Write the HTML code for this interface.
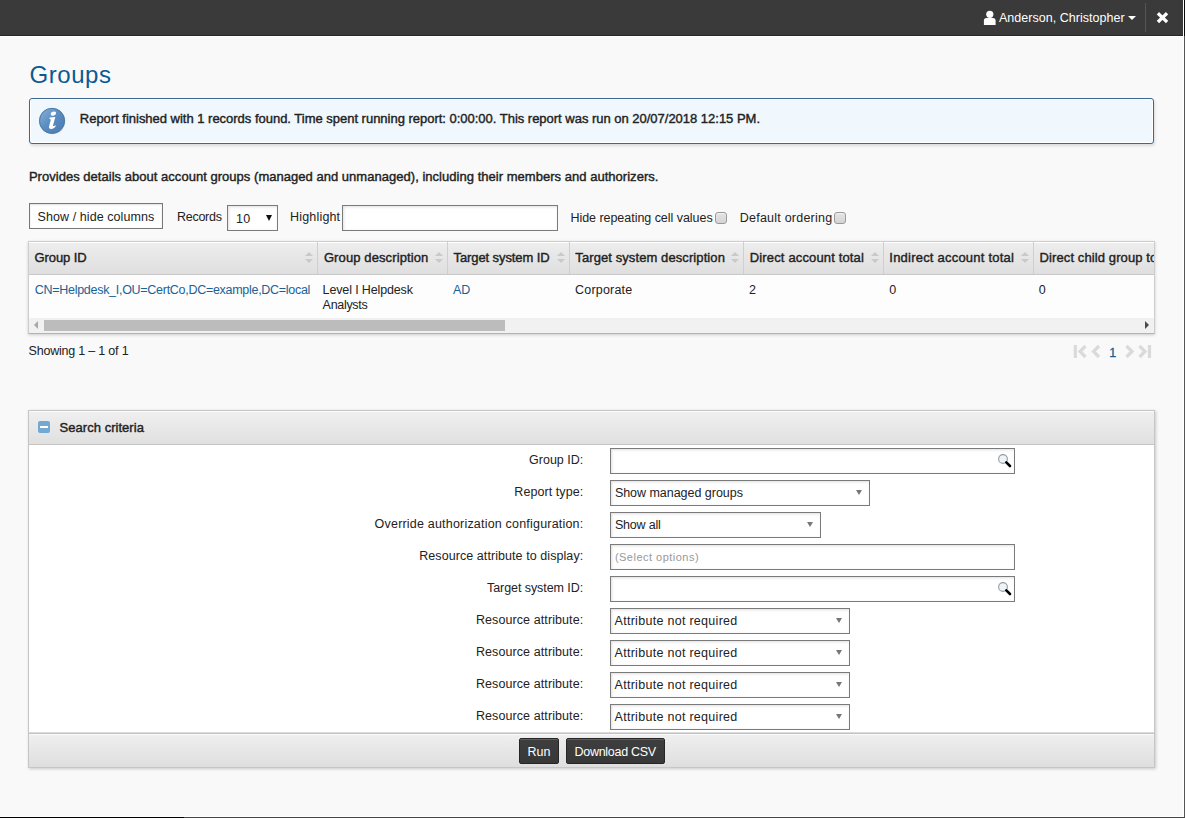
<!DOCTYPE html>
<html><head><meta charset="utf-8">
<style>
html,body{margin:0;padding:0}
body{width:1185px;height:818px;overflow:hidden;position:relative;background:#f9f9f9;font-family:"Liberation Sans",sans-serif;}
.a{position:absolute;box-sizing:border-box}
.t{position:absolute;white-space:nowrap;font-family:"Liberation Sans",sans-serif}
.inp{position:absolute;box-sizing:border-box;background:#fff;border:1px solid #7a7a7a;box-shadow:inset 1px 1px 3px rgba(0,0,0,.12)}
.sel{position:absolute;box-sizing:border-box;background:#fff;border:1px solid #7a7a7a;box-shadow:inset 1px 1px 3px rgba(0,0,0,.12)}
.arr{position:absolute;width:0;height:0;border-left:3.5px solid transparent;border-right:3.5px solid transparent;border-top:5px solid #777}
.sort{position:absolute;width:9px;height:11px}
.sort:before{content:"";position:absolute;left:0;top:0;border-left:4.5px solid transparent;border-right:4.5px solid transparent;border-bottom:4.5px solid #c9c9c9}
.sort:after{content:"";position:absolute;left:0;top:6.5px;border-left:4.5px solid transparent;border-right:4.5px solid transparent;border-top:4.5px solid #c9c9c9}
.vdiv{position:absolute;top:242px;width:1px;height:32px;background:#cfcfcf}
.cb{position:absolute;width:12px;height:12px;box-sizing:border-box;border:1px solid #9a9a9a;border-radius:3px;background:linear-gradient(#e4e4e4,#d4d4d4);box-shadow:inset 0 1px 1px rgba(255,255,255,.6)}
.btn{position:absolute;box-sizing:border-box;background:linear-gradient(#3e3e3e,#383838);border:1px solid #262626;border-radius:2px;height:26px;top:738px;box-shadow:inset 0 1px 0 rgba(255,255,255,.18)}
</style></head>
<body>
<!-- top bar -->
<div class="a" style="left:0;top:0;width:1183px;height:35px;background:#3a3a3a"></div>
<div class="a" style="left:0;top:35px;width:1183px;height:1px;background:#272727"></div>
<div class="a" style="left:0;top:36px;width:1184px;height:1px;background:#fff"></div>
<div class="a" style="left:1183px;top:0;width:1px;height:818px;background:#fff"></div>
<div class="a" style="left:1184px;top:0;width:1px;height:36px;background:#0a0a0a"></div>
<div class="a" style="left:1184px;top:36px;width:1px;height:782px;background:#555"></div>
<div class="a" style="left:0;top:816px;width:1184px;height:1px;background:#fff"></div>
<div class="a" style="left:0;top:817px;width:184px;height:1px;background:#000"></div>
<div class="a" style="left:184px;top:817px;width:1001px;height:1px;background:#454545"></div>
<!-- user icon -->
<svg class="a" style="left:983px;top:10px" width="15" height="16" viewBox="0 0 15 16">
<circle cx="6.8" cy="4.3" r="3.6" fill="#fff"/>
<path d="M0.9 15.1 L0.9 10.6 Q0.9 7.9 3.6 7.9 L9.9 7.9 Q12.6 7.9 12.6 10.6 L12.6 15.1 Z" fill="#fff"/>
</svg>
<div class="a" style="left:1128px;top:16px;width:0;height:0;border-left:4px solid transparent;border-right:4px solid transparent;border-top:4px solid #fff"></div>
<div class="a" style="left:1145px;top:3px;width:1px;height:29px;background:#555"></div>
<svg class="a" style="left:1156px;top:12px" width="13" height="12" viewBox="0 0 13 12">
<path d="M3.1 2.4 L9.9 8.9 M9.9 2.4 L3.1 8.9" stroke="#fff" stroke-width="3.3" stroke-linecap="square"/>
</svg>

<!-- info box -->
<div class="a" style="left:29px;top:98px;width:1125px;height:46px;border:1px solid #3d6893;border-radius:3px;background:#f1f8fd;box-shadow:inset 0 0 0 1px #fff,1px 2px 3px rgba(0,0,0,.12)"></div>
<svg class="a" style="left:38px;top:106px" width="29" height="29" viewBox="0 0 29 29">
<defs>
<linearGradient id="ig" x1="0" y1="0" x2="1" y2="1">
<stop offset="0" stop-color="#8db2da"/><stop offset="0.45" stop-color="#5d8fc3"/><stop offset="0.8" stop-color="#4f80b6"/><stop offset="1" stop-color="#6f9dcf"/>
</linearGradient>
</defs>
<circle cx="14.3" cy="15.3" r="13" fill="rgba(0,0,0,.16)"/>
<circle cx="14" cy="14.8" r="12.9" fill="url(#ig)"/>
<circle cx="14" cy="14.8" r="12.5" fill="none" stroke="#4a77a7" stroke-width="0.9"/>
<ellipse cx="15.4" cy="7.6" rx="2.8" ry="1.9" transform="rotate(-18 15.4 7.6)" fill="#fff"/>
<path d="M11.6 11.4 L17.3 11.0 L15.0 19.4 Q14.8 20.3 15.8 20.0 L18.0 19.3 Q17.0 22.5 13.6 22.9 Q10.4 23.1 11.0 20.5 L12.8 13.8 Q13.0 12.9 11.5 12.9 Z" fill="#fff"/>
</svg>

<!-- toolbar -->
<div class="a" style="left:29px;top:203px;width:134px;height:26px;border:1px solid #777;background:#fff;box-shadow:inset 0 1px 2px rgba(0,0,0,.12)"></div>
<div class="sel" style="left:227px;top:205px;width:51px;height:26px"></div>
<div class="a" style="left:266px;top:215px;width:0;height:0;border-left:3.2px solid transparent;border-right:3.2px solid transparent;border-top:6px solid #111"></div>
<div class="inp" style="left:342px;top:205px;width:216px;height:26px"></div>
<div class="cb" style="left:715px;top:212px"></div>
<div class="cb" style="left:834px;top:212px"></div>

<!-- table -->
<div class="a" style="left:28px;top:241px;width:1127px;height:93px;border:1px solid #cdcdcd;border-bottom-color:#b3b3b3;background:#fdfdfd;box-shadow:0 1px 3px rgba(0,0,0,.18)"></div>
<div class="a" style="left:29px;top:242px;width:1125px;height:32px;background:linear-gradient(#ededed,#dfdfdf);border-top:1px solid #fff"></div>
<div class="a" style="left:29px;top:274px;width:1125px;height:1px;background:#c8c8c8"></div>
<div class="vdiv" style="left:317px"></div>
<div class="vdiv" style="left:447px"></div>
<div class="vdiv" style="left:569px"></div>
<div class="vdiv" style="left:743px"></div>
<div class="vdiv" style="left:883px"></div>
<div class="vdiv" style="left:1033px"></div>
<div class="sort" style="left:305px;top:252px"></div>
<div class="sort" style="left:435px;top:252px"></div>
<div class="sort" style="left:557px;top:252px"></div>
<div class="sort" style="left:731px;top:252px"></div>
<div class="sort" style="left:871px;top:252px"></div>
<div class="sort" style="left:1021px;top:252px"></div>
<!-- scrollbar -->
<div class="a" style="left:29px;top:318px;width:1125px;height:15px;background:#f1f1f1"></div>
<div class="a" style="left:44px;top:320px;width:461px;height:11px;background:#bcbcbc"></div>
<div class="a" style="left:34px;top:321px;width:0;height:0;border-top:4px solid transparent;border-bottom:4px solid transparent;border-right:4.5px solid #a8a8a8"></div>
<div class="a" style="left:1145px;top:321px;width:0;height:0;border-top:4px solid transparent;border-bottom:4px solid transparent;border-left:4.5px solid #4a4a4a"></div>

<!-- pagination -->
<svg class="a" style="left:1072px;top:344px" width="82" height="15" viewBox="0 0 82 15">
<g fill="none" stroke="#dadada" stroke-width="3.2" stroke-linejoin="miter">
<path d="M3.3 1 V14"/>
<path d="M13.5 2 L8 7.5 L13.5 13"/>
<path d="M27 2 L21.5 7.5 L27 13"/>
<path d="M54.5 2 L60 7.5 L54.5 13"/>
<path d="M67.5 2 L73 7.5 L67.5 13"/>
<path d="M77.5 1 V14"/>
</g>
</svg>

<!-- search panel -->
<div class="a" style="left:28px;top:410px;width:1127px;height:358px;border:1px solid #c6c6c6;background:#fff;box-shadow:1px 1px 3px rgba(0,0,0,.2)"></div>
<div class="a" style="left:29px;top:411px;width:1125px;height:33px;background:linear-gradient(#efefef,#e0e0e0);border-top:1px solid #fafafa"></div>
<div class="a" style="left:29px;top:444px;width:1125px;height:1px;background:#c4c4c4"></div>
<div class="a" style="left:38px;top:421px;width:12px;height:12px;border-radius:2px;background:#73a8d2"></div>
<div class="a" style="left:40px;top:426px;width:8px;height:2px;background:#fff"></div>

<!-- form controls -->
<div class="inp" style="left:610px;top:448px;width:405px;height:26px"></div>
<div class="sel" style="left:610px;top:480px;width:260px;height:26px"></div>
<div class="arr" style="left:856px;top:490px"></div>
<div class="sel" style="left:610px;top:512px;width:211px;height:26px"></div>
<div class="arr" style="left:807px;top:522px"></div>
<div class="inp" style="left:610px;top:544px;width:405px;height:26px"></div>
<div class="inp" style="left:610px;top:576px;width:405px;height:26px"></div>
<div class="sel" style="left:610px;top:608px;width:240px;height:26px"></div>
<div class="arr" style="left:836px;top:618px"></div>
<div class="sel" style="left:610px;top:640px;width:240px;height:26px"></div>
<div class="arr" style="left:836px;top:650px"></div>
<div class="sel" style="left:610px;top:672px;width:240px;height:26px"></div>
<div class="arr" style="left:836px;top:682px"></div>
<div class="sel" style="left:610px;top:704px;width:240px;height:26px"></div>
<div class="arr" style="left:836px;top:714px"></div>
<svg class="a" style="left:997px;top:453px" width="16" height="16" viewBox="0 0 16 16">
<circle cx="6" cy="6" r="4.4" fill="#eaf4fd" stroke="#9a9a9a" stroke-width="1.1"/>
<path d="M9.3 9.3 L13 13" stroke="#000" stroke-width="2.6" stroke-linecap="round"/>
</svg>
<svg class="a" style="left:997px;top:581px" width="16" height="16" viewBox="0 0 16 16">
<circle cx="6" cy="6" r="4.4" fill="#eaf4fd" stroke="#9a9a9a" stroke-width="1.1"/>
<path d="M9.3 9.3 L13 13" stroke="#000" stroke-width="2.6" stroke-linecap="round"/>
</svg>

<!-- footer -->
<div class="a" style="left:29px;top:732px;width:1125px;height:1px;background:#dcdcdc"></div>
<div class="a" style="left:29px;top:733px;width:1125px;height:1px;background:#c2c2c2"></div>
<div class="a" style="left:29px;top:734px;width:1125px;height:33px;background:linear-gradient(#efefef,#dedede);border-top:1px solid #fafafa"></div>
<div class="btn" style="left:519px;width:40px"></div>
<div class="btn" style="left:566px;width:99px"></div>

<div class='t' style='top:7.67px;font-size:12.5px;line-height:20px;color:#fff;letter-spacing:0.031px;left:998.90px;'>Anderson, Christopher</div>
<div class='t' style='top:59.68px;font-size:24px;line-height:30px;color:#0b5a94;letter-spacing:0.539px;left:29.60px;'>Groups</div>
<div class='t' style='top:109.49px;font-size:13px;line-height:20px;color:#222;-webkit-text-stroke:0.4px #222;letter-spacing:-0.015px;left:79.80px;'>Report finished with 1 records found. Time spent running report: 0:00:00. This report was run on 20/07/2018 12:15 PM.</div>
<div class='t' style='top:167.09px;font-size:13px;line-height:20px;color:#222;-webkit-text-stroke:0.4px #222;letter-spacing:0.029px;left:28.90px;'>Provides details about account groups (managed and unmanaged), including their members and authorizers.</div>
<div class='t' style='top:206.67px;font-size:12.5px;line-height:20px;color:#222;letter-spacing:0.070px;left:37.60px;'>Show / hide columns</div>
<div class='t' style='top:206.67px;font-size:12.5px;line-height:20px;color:#222;letter-spacing:-0.291px;left:177.10px;'>Records</div>
<div class='t' style='top:208.67px;font-size:12.5px;line-height:20px;color:#222;letter-spacing:0.094px;left:236.10px;'>10</div>
<div class='t' style='top:206.67px;font-size:12.5px;line-height:20px;color:#222;letter-spacing:0.170px;left:290.10px;'>Highlight</div>
<div class='t' style='top:207.67px;font-size:12.5px;line-height:20px;color:#222;letter-spacing:-0.034px;left:570.40px;'>Hide repeating cell values</div>
<div class='t' style='top:207.67px;font-size:12.5px;line-height:20px;color:#222;letter-spacing:0.223px;left:739.80px;'>Default ordering</div>
<div class='t' style='top:248.09px;font-size:13px;line-height:20px;color:#222;-webkit-text-stroke:0.4px #222;letter-spacing:-0.093px;left:34.50px;'>Group ID</div>
<div class='t' style='top:248.09px;font-size:13px;line-height:20px;color:#222;-webkit-text-stroke:0.4px #222;letter-spacing:0.111px;left:323.90px;'>Group description</div>
<div class='t' style='top:248.09px;font-size:13px;line-height:20px;color:#222;-webkit-text-stroke:0.4px #222;letter-spacing:-0.102px;left:453.60px;'>Target system ID</div>
<div class='t' style='top:248.09px;font-size:13px;line-height:20px;color:#222;-webkit-text-stroke:0.4px #222;letter-spacing:0.091px;left:575.30px;'>Target system description</div>
<div class='t' style='top:248.09px;font-size:13px;line-height:20px;color:#222;-webkit-text-stroke:0.4px #222;letter-spacing:0.148px;left:749.80px;'>Direct account total</div>
<div class='t' style='top:248.09px;font-size:13px;line-height:20px;color:#222;-webkit-text-stroke:0.4px #222;letter-spacing:0.221px;left:889.30px;'>Indirect account total</div>
<div class='t' style='top:248.09px;font-size:13px;line-height:20px;color:#222;-webkit-text-stroke:0.4px #222;left:1039.60px;letter-spacing:0.1px;width:114.4px;overflow:hidden'>Direct child group total</div>
<div class='t' style='top:279.67px;font-size:12.5px;line-height:20px;color:#1a6196;letter-spacing:-0.286px;left:34.80px;'>CN=Helpdesk_I,OU=CertCo,DC=example,DC=local</div>
<div class='t' style='top:279.67px;font-size:12.5px;line-height:20px;color:#222;letter-spacing:-0.135px;left:322.60px;'>Level I Helpdesk</div>
<div class='t' style='top:294.97px;font-size:12.5px;line-height:20px;color:#222;left:322.60px;letter-spacing:-0.3px'>Analysts</div>
<div class='t' style='top:279.67px;font-size:12.5px;line-height:20px;color:#1a6196;letter-spacing:-0.075px;left:452.90px;'>AD</div>
<div class='t' style='top:279.67px;font-size:12.5px;line-height:20px;color:#222;letter-spacing:0.201px;left:575.00px;'>Corporate</div>
<div class='t' style='top:279.67px;font-size:12.5px;line-height:20px;color:#222;left:749.00px;'>2</div>
<div class='t' style='top:279.67px;font-size:12.5px;line-height:20px;color:#222;left:889.20px;'>0</div>
<div class='t' style='top:279.67px;font-size:12.5px;line-height:20px;color:#222;left:1038.80px;'>0</div>
<div class='t' style='top:340.97px;font-size:12.5px;line-height:20px;color:#222;letter-spacing:-0.209px;left:28.60px;'>Showing 1 – 1 of 1</div>
<div class='t' style='top:342.67px;font-size:12.5px;line-height:20px;color:#1a5e94;left:1109.30px;-webkit-text-stroke:0.3px #1a5e94'>1</div>
<div class='t' style='top:418.09px;font-size:13px;line-height:20px;color:#222;-webkit-text-stroke:0.4px #222;letter-spacing:0.035px;left:59.60px;'>Search criteria</div>
<div class='t' style='top:449.67px;font-size:12.5px;line-height:20px;color:#222;letter-spacing:-0.011px;right:601.81px;'>Group ID:</div>
<div class='t' style='top:481.67px;font-size:12.5px;line-height:20px;color:#222;letter-spacing:0.073px;right:601.73px;'>Report type:</div>
<div class='t' style='top:513.67px;font-size:12.5px;line-height:20px;color:#222;letter-spacing:0.197px;right:601.60px;'>Override authorization configuration:</div>
<div class='t' style='top:545.67px;font-size:12.5px;line-height:20px;color:#222;letter-spacing:0.073px;right:601.73px;'>Resource attribute to display:</div>
<div class='t' style='top:577.67px;font-size:12.5px;line-height:20px;color:#222;letter-spacing:-0.066px;right:601.87px;'>Target system ID:</div>
<div class='t' style='top:609.67px;font-size:12.5px;line-height:20px;color:#222;letter-spacing:0.094px;right:601.71px;'>Resource attribute:</div>
<div class='t' style='top:641.67px;font-size:12.5px;line-height:20px;color:#222;letter-spacing:0.094px;right:601.71px;'>Resource attribute:</div>
<div class='t' style='top:673.67px;font-size:12.5px;line-height:20px;color:#222;letter-spacing:0.094px;right:601.71px;'>Resource attribute:</div>
<div class='t' style='top:705.67px;font-size:12.5px;line-height:20px;color:#222;letter-spacing:0.094px;right:601.71px;'>Resource attribute:</div>
<div class='t' style='top:482.67px;font-size:12.5px;line-height:20px;color:#222;letter-spacing:-0.031px;left:614.90px;'>Show managed groups</div>
<div class='t' style='top:514.67px;font-size:12.5px;line-height:20px;color:#222;left:614.90px;letter-spacing:-0.2px'>Show all</div>
<div class='t' style='top:547.39px;font-size:11px;line-height:20px;color:#999;letter-spacing:0.484px;left:614.90px;'>(Select options)</div>
<div class='t' style='top:610.67px;font-size:12.5px;line-height:20px;color:#222;letter-spacing:0.288px;left:614.50px;'>Attribute not required</div>
<div class='t' style='top:642.67px;font-size:12.5px;line-height:20px;color:#222;letter-spacing:0.288px;left:614.50px;'>Attribute not required</div>
<div class='t' style='top:674.67px;font-size:12.5px;line-height:20px;color:#222;letter-spacing:0.288px;left:614.50px;'>Attribute not required</div>
<div class='t' style='top:706.67px;font-size:12.5px;line-height:20px;color:#222;letter-spacing:0.288px;left:614.50px;'>Attribute not required</div>
<div class='t' style='top:742.17px;font-size:12.5px;line-height:20px;color:#fff;letter-spacing:0.031px;left:527.50px;'>Run</div>
<div class='t' style='top:742.17px;font-size:12.5px;line-height:20px;color:#fff;letter-spacing:-0.297px;left:574.60px;'>Download CSV</div>
</body></html>
